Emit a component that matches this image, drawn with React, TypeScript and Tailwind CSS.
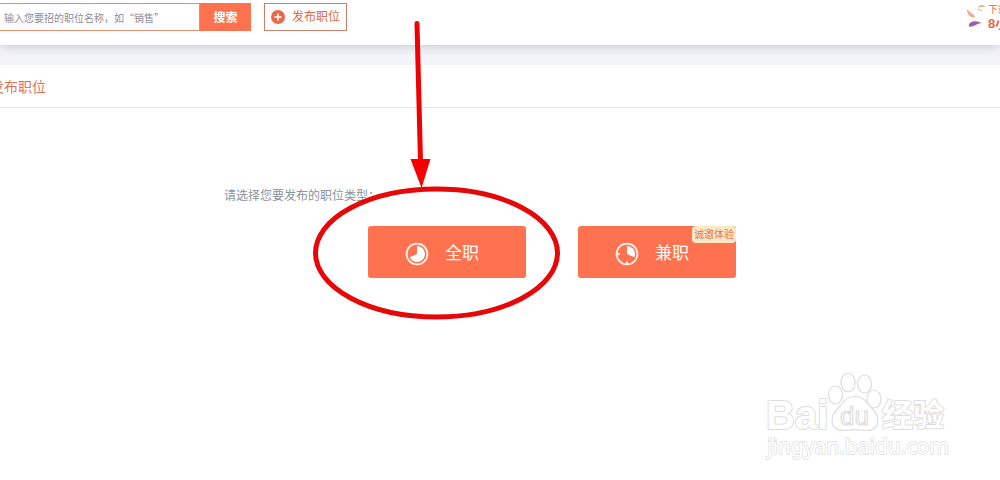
import type { ReactNode } from 'react';

function PlusIcon() {
  return (
    <svg viewBox="0 0 14 14" className="size-[14px]" aria-hidden="true">
      <circle cx="7" cy="7" r="7" fill="#e8694a" />
      <path d="M7 3.4v7.2M3.4 7h7.2" stroke="#fff" strokeWidth="1.6" />
    </svg>
  );
}

function FullTimeIcon() {
  return (
    <svg viewBox="0 0 24 24" className="size-6" fill="none" aria-hidden="true">
      <circle cx="12" cy="12" r="10.4" stroke="#fff3e8" strokeWidth="1.8" />
      <path d="M12 12V4a8 8 0 1 1-7.300 11.300Z" fill="#fff" />
    </svg>
  );
}

function PartTimeIcon() {
  return (
    <svg viewBox="0 0 24 24" className="size-6" fill="none" aria-hidden="true">
      <circle cx="12" cy="12" r="10.4" stroke="#fff3e8" strokeWidth="1.8" />
      <path d="M12 12V4a8 8 0 0 1 7.300 11.300Z" fill="#fff" />
      <path d="M2 12h3M12 19.500v3" stroke="#fff" strokeWidth="1.6" />
    </svg>
  );
}

function AppLogo() {
  return (
    <svg viewBox="0 0 20 24" className="h-6 w-5" aria-hidden="true">
      <path d="M0 6c0 6 3 8.500 8 8.500C8 11 3 10 0 6Z" fill="#f3ab92" />
      <path d="M11 4.500c1-3 5-3.500 8-1-3 .3-5 .5-8 1Z" fill="#f2ae82" />
      <path d="M10 6.500c2.500-.5 4 0 5 2" stroke="#f3c0aa" strokeWidth="1.200" fill="none" />
      <path d="M2 23.500c-1-5 7-7 13-3-5-1-7 4-13 3Z" fill="#a45aa8" />
    </svg>
  );
}

function TypeButton({ icon, label, badge }: { icon: ReactNode; label: string; badge?: string }) {
  return (
    <button
      type="button"
      className="relative flex h-[52px] w-[158px] items-center gap-4 rounded-[3px] bg-[#ff7250] pt-1 pl-[37px] text-[17px] text-white"
    >
      {icon}
      {label}
      {badge ? (
        <span className="absolute top-0 right-0 rounded-sm bg-[#fbe9c6] px-[2px] pt-px text-[10px] leading-4 text-[#dc7a58]">
          {badge}
        </span>
      ) : null}
    </button>
  );
}

function Annotation() {
  return (
    <svg
      viewBox="310 16 252 308"
      className="pointer-events-none absolute -top-[210px] -left-[58px] h-[308px] w-[252px] max-w-none"
      fill="none"
      aria-hidden="true"
    >
      <ellipse cx="436.500" cy="253" rx="121" ry="64" stroke="#e60808" strokeWidth="5" />
      <path d="M417 23.500 420.500 162" stroke="#f00000" strokeWidth="5" strokeLinecap="round" />
      <path d="M410.500 159h20L421.500 188Z" fill="#f80000" />
    </svg>
  );
}

function Watermark() {
  return (
    <svg
      viewBox="764 368 186 94"
      className="pointer-events-none absolute right-[50px] bottom-[18px] h-[94px] w-[186px]"
      fill="#fff"
      stroke="#dedede"
      strokeWidth="2"
      strokeLinejoin="round"
    >
      <g className="font-['Liberation_Sans','Noto_Sans_CJK_SC',sans-serif] font-bold" paintOrder="stroke">
        <text x="766" y="429" fontSize="40">Bai</text>
        <text x="882" y="426" fontSize="31">经验</text>
      </g>
      <g strokeWidth="1.200">
        <ellipse cx="835.500" cy="395" rx="7" ry="9" />
        <ellipse cx="848" cy="382.500" rx="7" ry="9.500" />
        <ellipse cx="864.500" cy="384" rx="7" ry="9" />
        <ellipse cx="874" cy="399" rx="7" ry="9" />
        <path d="M855 396.500c-7 0-10 3-13.500 8-3.500 4.500-9.500 8-9.500 16 0 6.500 5 10 11 10 4 0 8-.8 12-.8s8 .8 12 .8c6 0 11-3.500 11-10 0-8-6-11.500-9.500-16-3.500-5-6.500-8-13.500-8Z" />
        <text x="840" y="425" fontSize="26" className="font-['Liberation_Sans',sans-serif]">du</text>
      </g>
      <text
        x="767"
        y="454"
        fontSize="21"
        strokeWidth="1.500"
        paintOrder="stroke"
        className="font-['Noto_Sans',sans-serif]"
      >
        jingyan.baidu.com
      </text>
    </svg>
  );
}

export default function App() {
  return (
    <div
      lang="zh-CN"
      className="relative flex min-h-screen flex-col overflow-hidden bg-[#f3f3f9] font-['Liberation_Sans','Noto_Sans_CJK_SC',sans-serif]"
    >
      <header className="relative flex items-start bg-white pt-[3px] pb-[14px] shadow-[0_1px_10px_rgba(40,40,70,0.22)]">
        <form className="flex h-7" onSubmit={(e) => e.preventDefault()}>
          <input
            type="text"
            aria-label="职位名称"
            placeholder="输入您要招的职位名称，如“销售”"
            className="w-[200px] border border-l-0 border-[#e08f72] bg-white pl-1 font-['Noto_Sans_CJK_SC',sans-serif] text-[10px] outline-none placeholder:text-[#8d8d9b]"
          />
          <button type="submit" className="w-[51px] bg-[#ff7250] pt-px text-xs font-bold text-white">
            搜索
          </button>
        </form>
        <button
          type="button"
          className="ml-[13px] flex h-7 items-center gap-[7px] border border-[#c98068] px-[6px] text-xs text-[#e0694a]"
        >
          <PlusIcon />
          发布职位
        </button>
        <a href="#" className="ml-auto flex items-start gap-[1px]">
          <AppLogo />
          <span className="w-3 text-[10px] leading-[14px] whitespace-nowrap text-[#e0694a]">
            下载
            <b className="block text-[13px]">8小</b>
          </span>
        </a>
      </header>

      <main className="mt-5 flex-1 bg-white">
        <h1 className="-ml-[10px] border-b border-[#e9e9ec] pt-3 pb-[10px] text-sm text-[#dd7458]">发布职位</h1>
        <section className="pt-20 pl-[224px]">
          <p className="text-xs text-[#8a939e]">请选择您要发布的职位类型：</p>
          <div className="mt-[22px] ml-36 flex gap-[52px]">
            <div className="relative">
              <TypeButton icon={<FullTimeIcon />} label="全职" />
              <Annotation />
            </div>
            <TypeButton icon={<PartTimeIcon />} label="兼职" badge="诚邀体验" />
          </div>
        </section>
      </main>

      <Watermark />
    </div>
  );
}
